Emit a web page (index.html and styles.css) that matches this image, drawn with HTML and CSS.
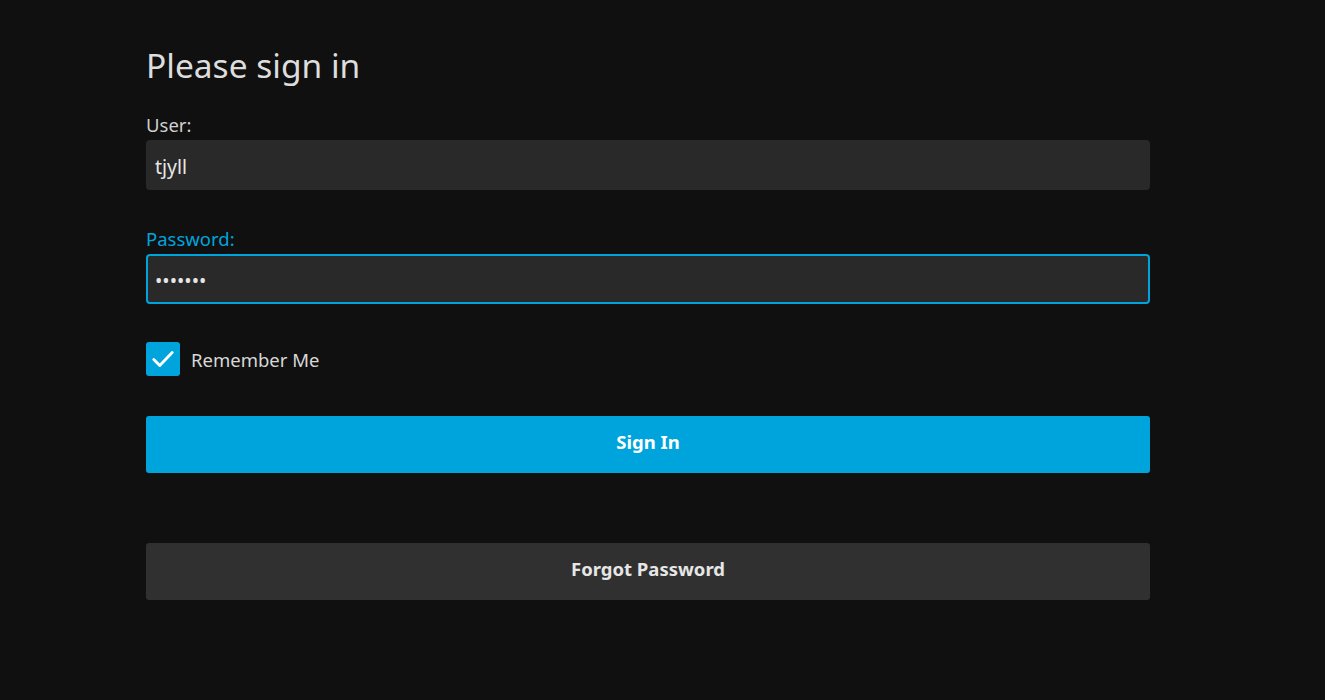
FILE: index.html
```html
<!DOCTYPE html>
<html>
<head>
<meta charset="utf-8">
<link rel="stylesheet" href="styles.css">
</head>
<body>
<div class="page">
  <form class="login">
    <h1 class="title">Please sign in</h1>
    <div class="field">
      <label class="label">User:</label>
      <div class="input">tjyll</div>
    </div>
    <div class="field">
      <label class="label focused">Password:</label>
      <div class="input active">&#8226;&#8226;&#8226;&#8226;&#8226;&#8226;&#8226;</div>
    </div>
    <div class="check-row">
      <span class="checkbox">
        <svg width="26" height="26" viewBox="0 0 24 24"><path d="M3.5 12.5l5.5 5.5 11.5-12" fill="none" stroke="#fff" stroke-width="2.6" stroke-linecap="round" stroke-linejoin="round"/></svg>
      </span>
      <span class="check-label">Remember Me</span>
    </div>
    <div class="btn primary">Sign In</div>
    <div class="btn secondary">Forgot Password</div>
  </form>
</div>
</body>
</html>
```

FILE: styles.css
```css
html, body {
  margin: 0;
  padding: 0;
  background: #101010;
  height: 100%;
}
body {
  font-family: "Noto Sans", sans-serif;
  color: #dddddd;
}
.page {
  padding: 0 175px 0 146px;
}
.login {
  width: 1004px;
  display: flex;
  flex-direction: column;
}
.title {
  font-size: 33.5px;
  font-weight: 400;
  margin: 43px 0 0;
  line-height: 44px;
  color: #dddddd;
}
.field {
  display: flex;
  flex-direction: column;
}
.field + .field {
  margin-top: 37px;
}
.title + .field {
  margin-top: 26px;
}
.label {
  font-size: 18.5px;
  line-height: 24px;
  margin-bottom: 3px;
  color: #cfcfcf;
}
.label.focused {
  color: #00a4dc;
}
.input {
  height: 50px;
  box-sizing: border-box;
  background: #292929;
  border: 2px solid #292929;
  border-radius: 4px;
  padding: 3px 7px 0;
  font-size: 19.5px;
  line-height: 43px;
  color: #e6e6e6;
}
.input.active {
  border-color: #00a4dc;
}
.check-row {
  display: flex;
  align-items: center;
  margin-top: 38px;
}
.checkbox {
  width: 34px;
  height: 34px;
  border-radius: 3px;
  background: #00a4dc;
  display: flex;
  align-items: center;
  justify-content: center;
}
.check-label {
  margin-left: 11px;
  font-size: 18.5px;
  color: #d8d8d8;
}
.btn {
  height: 57px;
  box-sizing: border-box;
  padding-bottom: 7px;
  border-radius: 3px;
  display: flex;
  align-items: center;
  justify-content: center;
  font-size: 18.5px;
  font-weight: 700;
}
.primary {
  margin-top: 40px;
  background: #00a4dc;
  color: #ffffff;
}
.secondary {
  margin-top: 70px;
  background: #303030;
  color: #e6e6e6;
}
```
